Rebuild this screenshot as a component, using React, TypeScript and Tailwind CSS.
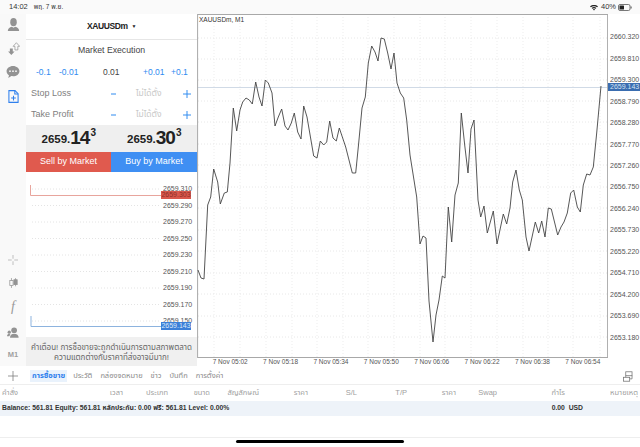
const FONT = "font-['Liberation_Sans','Noto_Sans','Noto_Sans_Thai','DejaVu_Sans',sans-serif]";

const CHART_LINE =
  "198,270 201,278 204,279 207.7,205 210.7,197 213.7,169 217.7,182 220.3,204 224.3,193 227.3,192 230,163 233.3,108 236.7,131 240,110 242.7,102 246,98 249.3,100 252.3,104 255.7,82 259,97 262,106 265.3,80 268.3,83 272,93 275,126 278.3,117 281.7,109 285,126 288,130 291.3,123 294.3,113 297.7,132 301,139 303.7,106 307,117 313.7,156 317,158 320.3,141 323.7,145 326.7,142 329.7,121 333,138 336.3,141 339.3,128 345.7,147 352.3,173 355.7,173 358.7,143 362,108 365.3,97 368.3,63 371.7,46 375,52 378,61 381,38 384.3,39 387.7,53 391,69 394,53 397,83 400.3,93 403.7,98 406.7,120 410,155 416.7,197 420,244 423,236 426,238 429,301 433,342 436,315 439,300 442.3,276 445,278 448.3,207 451.7,242 455,195 458.3,183 461.3,113 464.7,145 468,173 471,129 474,120 478,200 480.7,217 484,206 487.3,233 493.3,211 497,244 503.3,214 506.7,224 510,208 512.7,182 516,170 519.3,190 522.3,200 526,237 529,251 535.3,222 538.7,233 541.7,221 545,237 548.3,208 551.3,209 557.7,235 561,227 564,222 567.3,213 570.7,193 573.7,190 577.3,207 580.3,212 583.3,185 586.7,174 590,175 593.3,167 596.7,133 601,86";

const H_GRID = [38, 59, 80, 101, 122, 144, 165, 187, 208, 230, 251, 273, 294, 316, 337];
const V_GRID = [214, 240, 266, 292, 317, 343, 368, 394, 420, 445, 471, 497, 523, 548, 573, 600];
const Y_LABELS = ["2660.320", "2659.810", "2659.300", "2658.790", "2658.280", "2657.770", "2657.260", "2656.750", "2656.240", "2655.730", "2655.220", "2654.710", "2654.200", "2653.690", "2653.180"];
const X_LABELS = ["7 Nov 05:02", "7 Nov 05:18", "7 Nov 05:34", "7 Nov 05:50", "7 Nov 06:06", "7 Nov 06:22", "7 Nov 06:38", "7 Nov 06:54"];
const MINI_LABELS = ["2659.310", "2659.290", "2659.270", "2659.250", "2659.230", "2659.210", "2659.190", "2659.170", "2659.150"];
const TABS = ["ประวัติ", "กล่องจดหมาย", "ข่าว", "บันทึก", "การตั้งค่า"];

const COLUMNS: { label: string; width: string }[] = [
  { label: "เวลา", width: "w-[105px]" },
  { label: "ประเภท", width: "w-[45px]" },
  { label: "ขนาด", width: "w-[42px]" },
  { label: "สัญลักษณ์", width: "w-[49px]" },
  { label: "ราคา", width: "w-[49px]" },
  { label: "S/L", width: "w-[49px]" },
  { label: "T/P", width: "w-[50px]" },
  { label: "ราคา", width: "w-[49px]" },
  { label: "Swap", width: "w-[41px]" },
  { label: "กำไร", width: "w-[68px]" },
  { label: "หมายเหตุ", width: "w-[73px]" },
];

function SidebarIcons() {
  return (
    <div className="flex h-full w-[26px] flex-col items-center bg-[#f9f9f9] text-[#939393]">
      <svg className="mt-[4px]" width="13" height="14" viewBox="0 0 16 17" fill="currentColor">
        <ellipse cx="8" cy="5" rx="4" ry="5" />
        <path d="M1 16c0-3 2-5 5-5.500l2 1.500 2-1.500c3 .5 5 2.500 5 5.500z" />
      </svg>
      <svg className="mt-[10px]" width="13" height="13" viewBox="0 0 18 18">
        <path d="M4 9h4v4h2.500l-4.500 5-4.500-5H4z" fill="currentColor" />
        <path d="M11 11V6H8.500L13 1l4.500 5H15v5z" fill="none" stroke="currentColor" strokeWidth="1" />
      </svg>
      <svg className="mt-[11px]" width="14" height="12" viewBox="0 0 15 14" fill="currentColor">
        <path d="M7.500 0C3.400 0 0 2.700 0 6c0 1.900 1.100 3.600 2.800 4.700L2 14l3.600-2.200c.6.100 1.300.2 1.900.2 4.100 0 7.500-2.700 7.500-6s-3.400-6-7.500-6z" />
        <circle cx="4" cy="6" r="1" fill="#f9f9f9" />
        <circle cx="7.500" cy="6" r="1" fill="#f9f9f9" />
        <circle cx="11" cy="6" r="1" fill="#f9f9f9" />
      </svg>
      <svg className="mt-[12px]" width="11" height="13" viewBox="0 0 12 15" fill="none" stroke="#2f80ed" strokeWidth="1.200">
        <path d="M.7.700h7l3.600 3.600v10H.7z" />
        <path d="M7.500.700v3.800h3.800M6 6.500v5.500M3.300 9.200h5.400" />
      </svg>
      <div className="flex-1" />
      <svg className="mb-[13px]" width="10" height="10" viewBox="0 0 12 12" stroke="#b4b4b4" strokeWidth="1">
        <path d="M6 0v4.500M6 7.500V12M0 6h4.500M7.500 6H12" />
      </svg>
      <svg className="mb-[12px]" width="9" height="10" viewBox="0 0 11 12" stroke="currentColor" strokeWidth="0.9">
        <path d="M3 0v12" />
        <rect x="1" y="3" width="4" height="6" fill="#f9f9f9" />
        <path d="M8 0v10" />
        <rect x="6" y="2" width="4" height="6" fill="currentColor" />
      </svg>
      <span className="mb-[13px] font-['Liberation_Serif',serif] text-[14px] leading-[14px] text-[#999999] italic">f</span>
      <svg className="mb-[12px]" width="12" height="11" viewBox="0 0 16 14" fill="currentColor">
        <circle cx="9.500" cy="4" r="3.800" />
        <path d="M4 14c0-3.500 2-5.500 5.500-5.500S15.500 10.500 15.500 14z" />
        <circle cx="3" cy="6.500" r="2.200" />
        <path d="M0 12c0-2 1-3.500 3-3.500l1.500 1L3 12z" />
      </svg>
      <span className="mb-[6px] text-[7.500px] leading-[10px] font-bold text-[#a0a0a0]">M1</span>
    </div>
  );
}

function StepperRow() {
  return (
    <div className="flex h-[22px] items-center pt-[1px] text-[8.500px] text-[#2f8bf0]">
      <span className="ml-[10px] w-[23px]">-0.1</span>
      <span className="w-[44px]">-0.01</span>
      <span className="w-[40px] text-[#444444]">0.01</span>
      <span className="w-[28px]">+0.01</span>
      <span>+0.1</span>
    </div>
  );
}

function LevelRow({ label }: { label: string }) {
  return (
    <div className="flex h-[21px] items-center text-[9px]">
      <span className="ml-[5px] w-[80px] text-[#808080]">{label}</span>
      <svg className="mr-[20px]" width="5" height="2" viewBox="0 0 5 2" stroke="#2f8bf0" strokeWidth="1">
        <path d="M0 1h5" />
      </svg>
      <span className="w-[47px] text-[8.500px] text-[#c8c8c8]">ไม่ได้ตั้ง</span>
      <svg width="8" height="8" viewBox="0 0 9 9" stroke="#2f8bf0" strokeWidth="1.100">
        <path d="M4.500 0v9M0 4.500h9" />
      </svg>
    </div>
  );
}

function Price({ big, small }: { big: string; small: string }) {
  return (
    <div className="flex w-1/2 items-start justify-center font-bold text-[#222222]">
      <span className="mt-[8px] text-[11.500px] leading-[13px]">2659.</span>
      <span className="mt-[3px] text-[19px] leading-[19px] tracking-[-1px]">{big}</span>
      <span className="mt-[2px] ml-[1px] text-[10px] leading-[11px]">{small}</span>
    </div>
  );
}

function MiniChart() {
  return (
    <div className="relative flex h-[165px] bg-white">
      <svg width="135" height="165" viewBox="0 0 135 165">
        {[0, 1, 2, 3, 4, 5, 6, 7, 8].map((i) => (
          <line key={i} x1="6" x2="135" y1={17 + i * 16.5} y2={17 + i * 16.5} stroke="#dddddd" strokeWidth="0.8" strokeDasharray="1 2" />
        ))}
        <path d="M4.500 13v10.500H135" fill="none" stroke="#e8a59d" strokeWidth="1" />
        <path d="M5 144v10.500h130" fill="none" stroke="#8db3de" strokeWidth="1" />
      </svg>
      <div className="flex flex-col pt-[9px] text-[7px] leading-[16.500px] text-[#555555]">
        {MINI_LABELS.map((label) => (
          <span key={label} className="ml-[2px]">{label}</span>
        ))}
      </div>
      <span className="absolute top-[19px] left-[135px] h-[8px] w-[30px] bg-[#d9574c] text-center text-[7px] leading-[8px] text-[#8e3028]">2659.303</span>
      <span className="absolute top-[150px] left-[135px] h-[8px] w-[30px] bg-[#3b7fd8] text-center text-[7px] leading-[8px] text-[#dce9f8]">2659.143</span>
    </div>
  );
}

function OrderPanel() {
  return (
    <div className="flex h-full w-[171px] flex-col bg-white">
      <div className="flex h-[26px] items-center justify-center border-b border-[#e6e6e6] text-[8.500px] font-bold tracking-[-0.4px] text-[#222222]">
        XAUUSDm<span className="ml-[4px] text-[5px]">▼</span>
      </div>
      <div className="flex h-[21px] items-center justify-center text-[8.700px] text-[#444444]">Market Execution</div>
      <StepperRow />
      <LevelRow label="Stop Loss" />
      <LevelRow label="Take Profit" />
      <div className="flex h-[27px] bg-[#efefef]">
        <Price big="14" small="3" />
        <Price big="30" small="3" />
      </div>
      <div className="flex h-[20px] text-[9px] font-medium text-white">
        <div className="flex w-[85px] items-center justify-center bg-[#e05a4e]">Sell by Market</div>
        <div className="flex flex-1 items-center justify-center bg-[#3f8ff3]">Buy by Market</div>
      </div>
      <MiniChart />
      <div className="flex-1 bg-[#f0f0f0] pt-[6px] text-center text-[8px] leading-[9.500px] text-[#666666]">
        คำเตือน! การซื้อขายจะถูกดำเนินการตามสภาพตลาด
        <br />
        ความแตกต่างกับราคาที่ส่งอาจมีมาก!
      </div>
    </div>
  );
}

function PriceChart() {
  return (
    <div className="relative flex h-full flex-1 bg-white">
      <div className="flex w-[411px] flex-col">
        <svg width="411" height="344" viewBox="197 14 411 344">
          {H_GRID.map((y) => (
            <line key={y} x1="198" x2="608" y1={y} y2={y} stroke="#e2e2e2" strokeWidth="0.8" strokeDasharray="1 2" />
          ))}
          {V_GRID.map((x) => (
            <line key={x} x1={x} x2={x} y1="14" y2="358" stroke="#e8e8e8" strokeWidth="0.8" strokeDasharray="1 2" />
          ))}
          <line x1="198" x2="608" y1="87.500" y2="87.500" stroke="#c4d0df" strokeWidth="0.8" />
          <rect x="197.600" y="14.500" width="410" height="343" fill="none" stroke="#a8a8a8" strokeWidth="1" />
          <polyline points={CHART_LINE} fill="none" stroke="#444444" strokeWidth="0.900" strokeLinejoin="round" />
        </svg>
        <div className="ml-[8px] flex text-[6.500px] leading-[8px] text-[#555555]">
          {X_LABELS.map((label) => (
            <span key={label} className="w-[51.400px] text-center">{label}</span>
          ))}
        </div>
      </div>
      <div className="flex flex-col pt-[12.300px] text-[7px] leading-[21.460px] text-[#555555]">
        {Y_LABELS.map((label) => (
          <span key={label} className="ml-[2px]">{label}</span>
        ))}
      </div>
      <span className="absolute top-[2px] left-[2px] text-[6.500px] leading-[8px] text-[#333333]">XAUUSDm, M1</span>
      <span className="absolute top-[69px] left-[411px] h-[8px] w-[32px] bg-[#3a6db0] pl-[2px] text-[7px] leading-[8px] text-[#d6e3f3]">2659.143</span>
    </div>
  );
}

export default function App() {
  return (
    <div className={`flex h-[447px] w-[640px] flex-col overflow-hidden bg-white ${FONT}`}>
      <div className="flex h-[14px] items-center bg-[#fafafa] pl-[9px] text-[7.500px] text-[#333333]">
        <span>14:02</span>
        <span className="ml-[6px] text-[6.500px]">พฤ. 7 พ.ย.</span>
        <svg className="mr-[3px] ml-auto" width="8" height="7" viewBox="0 0 10 8" fill="#222222">
          <path d="M0 2.600C2.700.200 7.300.200 10 2.600L8.900 3.800C6.800 1.900 3.200 1.900 1.100 3.800z" />
          <path d="M2 4.600c1.700-1.500 4.300-1.500 6 0L7 5.700c-1.200-1-2.800-1-4 0z" />
          <path d="M3.800 6.400c.7-.5 1.700-.5 2.400 0L5 7.800z" />
        </svg>
        <span>40%</span>
        <svg className="mr-[8px] ml-[2px]" width="14" height="7" viewBox="0 0 14 7">
          <rect x="0.500" y="0.500" width="11.500" height="6" rx="1.500" fill="none" stroke="#555555" strokeWidth="0.800" />
          <rect x="1.500" y="1.500" width="4.500" height="4" rx="0.500" fill="#222222" />
          <rect x="12.600" y="2.500" width="1" height="2" fill="#555555" />
        </svg>
      </div>
      <div className="flex h-[352px]">
        <SidebarIcons />
        <OrderPanel />
        <PriceChart />
      </div>
      <div className="flex h-[19px] items-center border-b border-[#eeeeee] bg-white pt-[2px] text-[7.500px] text-[#8a8a8a]">
        <svg className="mr-[12px] ml-[8px]" width="10" height="10" viewBox="0 0 12 12" stroke="#777777" strokeWidth="0.900">
          <path d="M6 0v12M0 6h12" />
        </svg>
        <span className="flex h-[12px] items-center bg-[#e9f2fc] px-[2px] font-bold text-[#2f80ed]">การซื้อขาย</span>
        <div className="ml-[6px] flex gap-[8px]">
          {TABS.map((tab) => (
            <span key={tab}>{tab}</span>
          ))}
        </div>
        <svg className="mr-[6px] ml-auto" width="11" height="11" viewBox="0 0 14 13" fill="none" stroke="#777777" strokeWidth="1">
          <rect x="3.500" y="0.500" width="8" height="5" />
          <rect x="0.500" y="7.500" width="8" height="5" />
          <path d="M11.500 5.500v4h-3M3.500 5.500v2" />
        </svg>
      </div>
      <div className="flex h-[16px] items-center text-[7.500px] text-[#a0a0a0]">
        <span className="w-[18px] pl-[2px] whitespace-nowrap">คำสั่ง</span>
        {COLUMNS.map((col, i) => (
          <span key={i} className={`${col.width} text-right whitespace-nowrap`}>{col.label}</span>
        ))}
      </div>
      <div className="flex h-[15px] items-center bg-[#eef3f9] pl-[2px] text-[6.800px] font-bold text-[#333333]">
        <span>Balance: 561.81 Equity: 561.81 หลักประกัน: 0.00 ฟรี: 561.81 Level: 0.00%</span>
        <span className="mr-[57px] ml-auto">0.00&nbsp; USD</span>
      </div>
      <div className="mt-[21px] flex h-[10px] flex-col items-center border-t border-[#eeeeee] pt-[2px]">
        <div className="h-[3px] w-[168px] rounded-full bg-black" />
      </div>
    </div>
  );
}
